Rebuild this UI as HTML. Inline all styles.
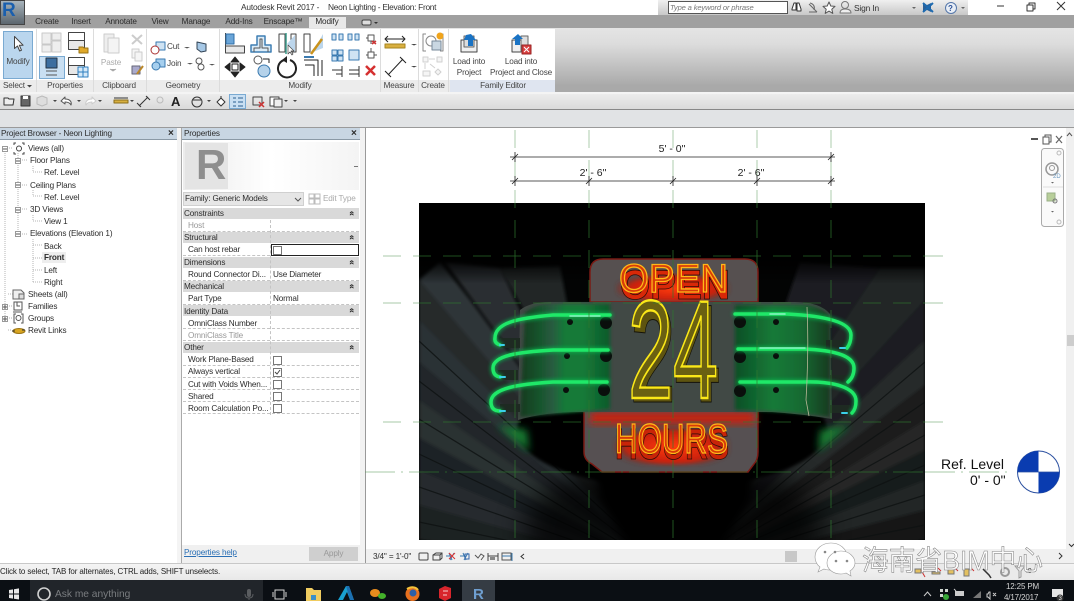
<!DOCTYPE html>
<html><head><meta charset="utf-8"><style>
html,body{margin:0;padding:0;background:#e1e3e5}
#p{position:relative;width:1074px;height:601px;overflow:hidden;font-family:"Liberation Sans","Noto Sans CJK SC",sans-serif;font-size:8.2px;letter-spacing:-.15px;color:#2c2c2c;filter:blur(.3px)}
#p div{position:absolute;white-space:nowrap}
#p svg text{letter-spacing:0}
.t{line-height:14px}
.c{transform:translateX(-50%);text-align:center}
.h{background:#d9d9d9;left:183px;width:176px;height:11.4px}
.r{left:183px;width:176px;height:11.4px;background:#fff;border-bottom:1px dashed #c4c4c4}
.u{left:349px;font-weight:bold;font-size:9px;line-height:9px;transform:rotate(-90deg)}
svg{position:absolute;left:0;top:0}
</style></head><body><div id="p">

<!-- chrome backgrounds -->
<div style="left:0;top:0;width:1074px;height:15px;background:#fff"></div>
<div style="left:0;top:15px;width:1074px;height:13px;background:#a0a0a0"></div>
<div style="left:0;top:28px;width:1074px;height:64px;background:linear-gradient(#e4e4e4,#dcdcdc 25%,#a9a9a9 90%)"></div>
<div style="left:0;top:29px;width:555px;height:51px;background:#fff"></div>
<div style="left:0;top:80px;width:555px;height:12px;background:#ececec"></div>
<div style="left:450px;top:80px;width:105px;height:12px;background:#dfe5f0"></div>
<div style="left:0;top:92px;width:1074px;height:2px;background:#f4f4f4"></div>
<div style="left:0;top:94px;width:1074px;height:15px;background:linear-gradient(#ececec,#dadada)"></div>
<div style="left:0;top:109px;width:1074px;height:1px;background:#888"></div>
<div style="left:0;top:110px;width:1074px;height:17px;background:#e1e3e5"></div>
<div style="left:0;top:127px;width:1074px;height:1px;background:#9a9a9a"></div>

<!-- separators -->
<div style="left:36px;top:29px;width:1px;height:63px;background:#dcdcdc"></div>
<div style="left:93px;top:29px;width:1px;height:63px;background:#dcdcdc"></div>
<div style="left:146px;top:29px;width:1px;height:63px;background:#dcdcdc"></div>
<div style="left:219px;top:29px;width:1px;height:63px;background:#dcdcdc"></div>
<div style="left:380px;top:29px;width:1px;height:63px;background:#dcdcdc"></div>
<div style="left:418px;top:29px;width:1px;height:63px;background:#dcdcdc"></div>
<div style="left:448px;top:29px;width:1px;height:63px;background:#dcdcdc"></div>

<!-- App button -->
<div style="left:0;top:0;width:25px;height:25px;background:linear-gradient(#a8b4bc,#5c666e);border:1px solid #444;box-sizing:border-box"></div>
<div style="left:2px;top:-1px;font:bold 19px/24px 'Liberation Sans',sans-serif;color:#1a5fae">R</div>

<!-- title -->
<div class="t" style="left:241px;top:0;font-size:8.4px;letter-spacing:-.2px;color:#333">Autodesk Revit 2017 -</div>
<div class="t" style="left:328px;top:0;font-size:8.4px;letter-spacing:-.3px;color:#333">Neon Lighting - Elevation: Front</div>

<!-- infocenter -->
<div style="left:658px;top:0;width:310px;height:15px;background:linear-gradient(#f0f0f0,#c8c8c8)"></div>
<div style="left:668px;top:1px;width:120px;height:13px;background:#fff;border:1px solid #555;box-sizing:border-box;font-style:italic;font-size:7.6px;letter-spacing:-.15px;line-height:11px;color:#777;padding-left:1px">Type a keyword or phrase</div>
<div class="t" style="left:854px;top:1px;font-size:8.4px;color:#333">Sign In</div>

<!-- tabs -->
<div style="left:309px;top:17px;width:37px;height:11px;background:#e8e8e8"></div>
<div class="t c" style="left:47px;top:15px;color:#2b2b2b">Create</div>
<div class="t c" style="left:81px;top:15px;color:#2b2b2b">Insert</div>
<div class="t c" style="left:121px;top:15px;color:#2b2b2b">Annotate</div>
<div class="t c" style="left:160px;top:15px;color:#2b2b2b">View</div>
<div class="t c" style="left:196px;top:15px;color:#2b2b2b">Manage</div>
<div class="t c" style="left:239px;top:15px;color:#2b2b2b">Add-Ins</div>
<div class="t c" style="left:283px;top:15px;color:#2b2b2b">Enscape™</div>
<div class="t c" style="left:327px;top:15px;color:#2b2b2b">Modify</div>

<!-- modify btn -->
<div style="left:3px;top:31px;width:30px;height:48px;background:#bad6ee;border:1px solid #7aaad2;box-sizing:border-box"></div>
<div class="t c" style="left:18px;top:55px;color:#444">Modify</div>
<div style="left:39px;top:56px;width:26px;height:23px;background:#c9dff2;border:1px solid #7aaad2;box-sizing:border-box"></div>

<!-- ribbon text -->
<div class="t" style="left:3px;top:79px;color:#444">Select</div>
<div class="t c" style="left:65px;top:79px;color:#444">Properties</div>
<div class="t c" style="left:119px;top:79px;color:#444">Clipboard</div>
<div class="t c" style="left:183px;top:79px;color:#444">Geometry</div>
<div class="t c" style="left:300px;top:79px;color:#444">Modify</div>
<div class="t c" style="left:399px;top:79px;color:#444">Measure</div>
<div class="t c" style="left:433px;top:79px;color:#444">Create</div>
<div class="t c" style="left:503px;top:79px;color:#444">Family Editor</div>
<div class="t c" style="left:111px;top:56px;color:#aaa">Paste</div>
<div class="t" style="left:167px;top:40px;color:#444">Cut</div>
<div class="t" style="left:167px;top:57px;color:#444">Join</div>
<div class="t c" style="left:469px;top:55px;color:#444">Load into</div>
<div class="t c" style="left:469px;top:66px;color:#444">Project</div>
<div class="t c" style="left:521px;top:55px;color:#444">Load into</div>
<div class="t c" style="left:521px;top:66px;color:#444">Project and Close</div>
<div style="left:229px;top:94px;width:17px;height:15px;background:#c9dff2;border:1px solid #7aaad2;box-sizing:border-box"></div>

<!-- Ribbon / QAT / infocenter icons -->
<svg width="1074" height="128" viewBox="0 0 1074 128" fill="none" stroke-linejoin="round">
 <path d="M14.500 36.500v12l3-2.500 2.200 5 1.800-.8-2.200-5h3.800z" fill="#fff" stroke="#444"/>
 <!-- properties -->
 <g stroke="#c8c8c8" fill="#eee"><rect x="42" y="33" width="9" height="11"/><rect x="52" y="33" width="9" height="7"/><rect x="42" y="45" width="9" height="7"/><rect x="52" y="41" width="9" height="11"/></g>
 <g stroke="#444"><rect x="68.500" y="32.500" width="16" height="8" fill="#fff"/><rect x="68.500" y="40.500" width="16" height="9" fill="#e8e8e8"/></g>
 <path d="M79 47h4l1 1h4v5h-9z" fill="#e0a92a" stroke="#9a7415"/>
 <rect x="46" y="58" width="11" height="10" fill="#3c6ea0" stroke="#234"/><path d="M46 71h11M46 75h11" stroke="#555"/>
 <g stroke="#444"><rect x="68.500" y="57.500" width="16" height="8" fill="#fff"/><rect x="68.500" y="65.500" width="16" height="9" fill="#e8e8e8"/></g>
 <g stroke="#2f7fc0" fill="#d5e8f7"><rect x="78" y="67" width="5" height="5"/><rect x="83" y="67" width="5" height="5"/><rect x="78" y="72" width="5" height="5"/><rect x="83" y="72" width="5" height="5"/></g>
 <!-- clipboard -->
 <path d="M104 34h10v18h-10z" fill="#eee" stroke="#ccc"/><path d="M108 38h11v15h-11z" fill="#f4f4f4" stroke="#ccc"/>
 <path d="M132 35l10 9M142 35l-10 9" stroke="#ccc" stroke-width="2"/>
 <rect x="132" y="49" width="7" height="9" fill="#f5f5f5" stroke="#ccc"/><rect x="135" y="52" width="7" height="9" fill="#f5f5f5" stroke="#ccc"/>
 <path d="M132 66h8v8h-8z" fill="#aac" stroke="#667"/><path d="M137 74l6-8" stroke="#b8862a" stroke-width="2"/>
 <path d="M110 69l3 2 3-2" stroke="#aaa" fill="#aaa"/>
 <!-- geometry -->
 <rect x="156" y="42" width="9" height="8" fill="#cfe3f3" stroke="#3a7ab0"/><circle cx="155" cy="50" r="4" fill="#fff" stroke="#a33"/>
 <rect x="156" y="59" width="9" height="8" fill="#a6cfee" stroke="#3a7ab0"/><circle cx="156" cy="66" r="4" fill="#a6cfee" stroke="#3a7ab0"/>
 <path d="M184 47l3 1.500 3-1.500zM187 63l3 1.500 3-1.500z" fill="#555"/>
 <path d="M197 42l9 2v7l-5 1-4-3z" fill="#a6c8e6" stroke="#345"/>
 <circle cx="199" cy="61" r="3" stroke="#555"/><circle cx="201" cy="67" r="3" stroke="#555"/><path d="M209 64l3 1.500 3-1.500z" fill="#555"/>
 <!-- modify row 1 -->
 <path d="M225.500 33v20h19v-7h-19" stroke="#444" fill="#e8e8e8"/><rect x="226" y="34" width="8" height="10" fill="#6aa5d8" stroke="#2f6fa8"/>
 <path d="M251 52v-7h6v-9h8v9h6v7z" stroke="#3f7fb4" fill="#dcecf8" stroke-width="1.500"/><path d="M254 52v-4h6v-9h2v9h6v4" stroke="#555"/>
 <path d="M279 34h6v18h-6zM291 34h5v18h-5z" fill="#fff" stroke="#444"/><path d="M286 33v21" stroke="#3a9a8a" stroke-width="1.500"/><path d="M287 44l8-9v17z" fill="#bcd6ec"/><path d="M288 45v9l2-2 2 3 1-1-2-3h3z" fill="#fff" stroke="#444" stroke-width=".7"/>
 <path d="M304 34h6v18h-6z" fill="#fff" stroke="#444"/><path d="M313 52l10-18v14z" fill="#bcd6ec"/><path d="M311 54l11-15" stroke="#c9921d" stroke-width="2.500"/>
 <!-- row 2 -->
 <path d="M235 57l4 5h-8zM235 77l4-5h-8zM225 67l5-4v8zM245 67l-5-4v8z" fill="#222" stroke="#222"/><rect x="232" y="64" width="6" height="6" stroke="#222" fill="#fff"/>
 <circle cx="258" cy="60" r="4" stroke="#555" fill="#fff"/><circle cx="264" cy="71" r="6" fill="#b5d2ea" stroke="#3a7ab0"/><path d="M263 59h6v4" stroke="#222"/>
 <path d="M284 60a9 9 0 1 0 6 0" stroke="#222" stroke-width="2"/><path d="M287 56l-5 4 5 3z" fill="#222"/>
 <path d="M304 60h14v16M305 65h9v11M322 60v16" stroke="#222"/><path d="M304 57h10" stroke="#3a7ab0" stroke-width="2"/>
 <!-- small -->
 <g stroke="#3a7ab0" fill="#cfe3f3"><rect x="332" y="34" width="4" height="6"/><rect x="339" y="34" width="4" height="6"/><rect x="348" y="34" width="4" height="6"/><rect x="355" y="34" width="4" height="6"/>
 <rect x="332" y="50" width="5" height="5"/><rect x="338" y="50" width="5" height="5"/><rect x="332" y="56" width="5" height="5"/><rect x="338" y="56" width="5" height="5"/>
 <rect x="349" y="50" width="10" height="10"/></g>
 <path d="M332 70h10M336 74h6M342 66v11M349 70h10M349 74h10M359 66v11" stroke="#333"/>
 <path d="M368 35h6v6h-6zM366 38h2M371 41v3" stroke="#555"/><path d="M372 41l4 3M376 41l-4 3" stroke="#c33" stroke-width="1.500"/>
 <path d="M368 52h6v6h-6zM366 55h2M374 55h3M371 48v4" stroke="#555"/>
 <path d="M366 66l9 9M375 66l-9 9" stroke="#d53030" stroke-width="2.500"/>
 <!-- measure -->
 <path d="M385 39h20M388 36l-3 3 3 3M402 36l3 3-3 3" stroke="#222"/><rect x="385" y="44" width="20" height="4" fill="#d9b040" stroke="#a68520"/>
 <path d="M388 75l15-16M385 71l6 6M400 57l6 6" stroke="#222"/><path d="M411 44l3 1.500 3-1.500zM411 66l3 1.500 3-1.500z" fill="#444"/>
 <!-- create -->
 <path d="M426 34h-3v17h3M440 34h3v17h-3" stroke="#888"/><circle cx="431" cy="41" r="5" stroke="#888" fill="#fff"/><rect x="432" y="41" width="9" height="9" fill="#c9d7e2" stroke="#789"/><circle cx="440" cy="36" r="3.500" fill="#f0a41c"/>
 <g stroke="#d0d0d0" fill="#f5f5f5"><rect x="423" y="57" width="5" height="5"/><rect x="437" y="57" width="5" height="5"/><rect x="423" y="71" width="7" height="5"/><path d="M438 69l3 3-3 3-3-3z"/></g><path d="M429 59h6M425 63v6M430 64l5 4" stroke="#d0d0d0"/>
 <!-- load -->
 <path d="M461 40h16v12h-16z" fill="#f0f0f0" stroke="#444"/><path d="M464 36h10v11h-10z" fill="#ddd" stroke="#666"/><path d="M466 35l5-1 5 6h-3v6h-5v-6h-4z" fill="#1a73c4"/>
 <path d="M512 40h12v12h-12z" fill="#f0f0f0" stroke="#444"/><rect x="521" y="36" width="7" height="16" fill="#ddd" stroke="#666"/><path d="M518 34l5 5h-3v6h-5v-6h-3z" fill="#1a73c4"/><rect x="522" y="45" width="9" height="9" fill="#d84040" stroke="#922"/><path d="M524 47l5 5M529 47l-5 5" stroke="#fff"/>
 <!-- select arrow, tab -->
 <path d="M27 85l5 0-2.500 2.500z" fill="#444"/><rect x="362" y="20" width="9" height="5" rx="1.500" fill="#ddd" stroke="#444"/><path d="M374 22h4l-2 2z" fill="#333"/>
 <!-- qat -->
 <path d="M4 98h4l1 1h5l-1 6H4z" fill="#eee" stroke="#333"/>
 <rect x="21" y="96" width="9" height="10" fill="#666" stroke="#333"/><rect x="23" y="96" width="5" height="3" fill="#fff"/>
 <path d="M37 98l5-2 5 2v6l-5 2-5-2z" stroke="#bbb" fill="#ddd"/><path d="M53 100h4l-2 2zM77 100h4l-2 2zM98 100h4l-2 2zM130 100h4l-2 2zM207 100h4l-2 2zM284 100h4l-2 2zM293 100h4l-2 2z" fill="#444"/>
 <path d="M61 101l4-4v2c5 0 7 3 6 6-1-2-3-3-6-3v2z" stroke="#555" fill="#fff"/><path d="M96 101l-4-4v2c-5 0-7 3-6 6 1-2 3-3 6-3v2z" stroke="#ccc" fill="#fff"/>
 <rect x="114" y="100" width="14" height="3" fill="#d8b040" stroke="#8a6d1a"/><path d="M114 98h14" stroke="#333"/>
 <path d="M139 106l9-9M137 103l4 4M146 96l4 4" stroke="#333"/><circle cx="160" cy="100" r="3" stroke="#bbb"/>
 <text x="171" y="106" font-family="Liberation Sans" font-size="13" font-weight="bold" fill="#222">A</text>
 <circle cx="197" cy="102" r="5" stroke="#333"/><path d="M193 100h8" stroke="#333"/>
 <path d="M217 102l4-4 4 4-4 4zM221 96v2" stroke="#333" fill="#fff"/>
 <path d="M233 98h3M238 98h5M233 102h3M238 102h5M233 106h3M238 106h5" stroke="#2a5f90"/>
 <rect x="253" y="97" width="9" height="8" stroke="#444"/><path d="M259 102l5 5M264 102l-5 5" stroke="#c33" stroke-width="1.500"/>
 <rect x="270" y="97" width="9" height="9" fill="#fff" stroke="#444"/><rect x="274" y="99" width="8" height="8" fill="#eee" stroke="#444"/>
 <!-- infocenter icons -->
 <path d="M792 9l2-6h2v7h-4zM797 10v-7h2l2 6v2h-4z" stroke="#333" fill="#fff"/>
 <path d="M809 4l8 8M809 12h8M810 3c4 1 5 4 4 7" stroke="#666"/>
 <path d="M829 2l1.800 4 4.200.4-3.200 2.800 1 4.200-3.800-2.300-3.800 2.300 1-4.200-3.200-2.800 4.200-.4z" stroke="#555" fill="#fff"/>
 <circle cx="845" cy="5" r="3.500" stroke="#777"/><path d="M840 13c0-3 2-4 5-4s6 1 6 4z" stroke="#777" fill="#eee"/>
 <path d="M912 7h4l-2 2z" fill="#666"/>
 <path d="M923 3l4 2 4-2v9l-4-2-4 2z" fill="#2a5f96"/><path d="M923 3l10 9M933 3l-10 9" stroke="#1d6ab0" stroke-width="2"/>
 <circle cx="951" cy="8" r="5.500" stroke="#5577aa" fill="#e8eef6"/><text x="948" y="11" font-family="Liberation Sans" font-size="8" font-weight="bold" fill="#2a4f96">?</text>
 <path d="M961 7h4l-2 2z" fill="#666"/>
 <path d="M997 6h7" stroke="#333"/><rect x="1027" y="5" width="6" height="6" stroke="#333" fill="#fff"/><path d="M1029 5v-2h6v6h-2" stroke="#333"/><path d="M1057 2l8 8M1065 2l-8 8" stroke="#333"/>
</svg>

<!-- Project Browser -->
<div style="left:0;top:128px;width:181px;height:435px;background:#fff"></div>
<div style="left:177px;top:128px;width:4px;height:435px;background:#f4f4f4"></div>
<div style="left:0;top:128px;width:177px;height:12px;background:#c8d6e3;border-bottom:1px solid #8a99a6;box-sizing:border-box"></div>
<div class="t" style="left:1px;top:127px">Project Browser - Neon Lighting</div>
<div class="t" style="left:168px;top:127px;font-weight:bold;font-size:10px">×</div>
<div class="t" style="left:28px;top:142px">Views (all)</div>
<div class="t" style="left:30px;top:154px">Floor Plans</div>
<div class="t" style="left:44px;top:166px">Ref. Level</div>
<div class="t" style="left:30px;top:179px">Ceiling Plans</div>
<div class="t" style="left:44px;top:191px">Ref. Level</div>
<div class="t" style="left:30px;top:203px">3D Views</div>
<div class="t" style="left:44px;top:215px">View 1</div>
<div class="t" style="left:30px;top:227px">Elevations (Elevation 1)</div>
<div class="t" style="left:44px;top:240px">Back</div>
<div style="left:42px;top:252px;width:24px;height:11px;background:#eee"></div>
<div class="t" style="left:44px;top:251px;font-weight:bold">Front</div>
<div class="t" style="left:44px;top:264px">Left</div>
<div class="t" style="left:44px;top:276px">Right</div>
<div class="t" style="left:28px;top:288px">Sheets (all)</div>
<div class="t" style="left:28px;top:300px">Families</div>
<div class="t" style="left:28px;top:312px">Groups</div>
<div class="t" style="left:28px;top:324px">Revit Links</div>
<svg width="177" height="340" viewBox="0 0 177 340" fill="none" stroke="#b5b5b5">
 <path d="M5 153v165M18 153v81M9 148h3M22 160h6M22 185h6M22 209h6M22 234h6M33 166v6h9M33 190v6h9M33 215v6h9M33 239v43M33 245h9M33 258h9M33 270h9M33 282h9M8 294h5M9 306h3M9 318h3M8 330h4" stroke-dasharray="1 1"/>
 <g fill="#fff" stroke="#999"><rect x="2.500" y="146.500" width="5" height="5"/><rect x="15.500" y="158.500" width="5" height="5"/><rect x="15.500" y="182.500" width="5" height="5"/><rect x="15.500" y="207.500" width="5" height="5"/><rect x="15.500" y="231.500" width="5" height="5"/><rect x="2.500" y="304.500" width="5" height="5"/><rect x="2.500" y="316.500" width="5" height="5"/></g>
 <path d="M3 149h4M16 161h4M16 185h4M16 210h4M16 234h4M3 307h4M5 305v4M3 319h4M5 317v4" stroke="#555"/>
 <path d="M14 145v-2h2M22 143h2v2M24 152v2h-2M16 154h-2v-2" stroke="#444"/><circle cx="19" cy="148.500" r="2.500" stroke="#444"/>
 <path d="M13 290h8l3 3v6H13z" fill="#eee" stroke="#666"/><rect x="19" y="294" width="5" height="5" fill="#ddd" stroke="#666"/>
 <path d="M14 302h8v8h-8z" stroke="#555"/><path d="M17 302v4h3" stroke="#555"/><path d="M13 312h9" stroke="#555"/>
 <path d="M16 314h-2v9h2M21 314h2v9h-2" stroke="#555"/><circle cx="18.500" cy="318" r="2.500" stroke="#555"/>
 <ellipse cx="19" cy="331" rx="6" ry="2.500" fill="#d9a520" stroke="#9a7415"/><path d="M12 331h3M22 330h3" stroke="#333"/>
</svg>

<!-- Properties -->
<div style="left:181px;top:128px;width:184px;height:435px;background:#fff;border-left:1px solid #aaa;box-sizing:border-box"></div>
<div style="left:360px;top:128px;width:5px;height:435px;background:#f2f2f2"></div>
<div style="left:182px;top:545px;width:178px;height:18px;background:#f0f0f0"></div>
<div style="left:182px;top:128px;width:178px;height:12px;background:#c8d6e3;border-bottom:1px solid #8a99a6;box-sizing:border-box"></div>
<div class="t" style="left:184px;top:127px">Properties</div>
<div class="t" style="left:351px;top:127px;font-weight:bold;font-size:10px">×</div>
<div style="left:183px;top:142px;width:176px;height:48px;background:linear-gradient(90deg,#ececec,#fff 50%,#f4f4f4)"></div>
<div style="left:185px;top:143px;width:43px;height:46px;background:#e4e4e4"></div>
<div style="left:196px;top:141px;font:bold 42px/48px 'Liberation Sans',sans-serif;letter-spacing:0;color:#8e8e8e">R</div>
<div style="left:354px;top:166px;width:4px;height:1px;background:#777"></div>
<div style="left:183px;top:192px;width:121px;height:14px;background:#e6e6e6;border:1px solid #d0d0d0;box-sizing:border-box"></div>
<div class="t" style="left:185px;top:192px">Family: Generic Models</div>
<div class="t" style="left:323px;top:192px;color:#aaa">Edit Type</div>
<svg style="left:0;top:0" width="370" height="210" viewBox="0 0 370 210" fill="none"><path d="M295 198l3 3 3-3" stroke="#555"/><rect x="309" y="194" width="5" height="4" stroke="#bbb"/><rect x="315" y="194" width="5" height="4" stroke="#bbb"/><rect x="309" y="199" width="5" height="5" stroke="#bbb"/><rect x="315" y="199" width="5" height="5" stroke="#bbb"/></svg>

<div style="left:183px;top:208px;width:176px;height:207px;background:#fff"></div>
<div class="h" style="top:208px"></div><div class="t" style="left:184px;top:207px">Constraints</div><div class="u" style="top:209px">»</div>
<div class="r" style="top:220px"></div><div class="t" style="left:188px;top:219px;color:#999">Host</div>
<div class="h" style="top:232px"></div><div class="t" style="left:184px;top:231px">Structural</div><div class="u" style="top:233px">»</div>
<div class="r" style="top:244px"></div><div class="t" style="left:188px;top:243px">Can host rebar</div>
<div class="h" style="top:257px"></div><div class="t" style="left:184px;top:256px">Dimensions</div><div class="u" style="top:258px">»</div>
<div class="r" style="top:269px"></div><div class="t" style="left:188px;top:268px">Round Connector Di...</div><div class="t" style="left:273px;top:268px">Use Diameter</div>
<div class="h" style="top:281px"></div><div class="t" style="left:184px;top:280px">Mechanical</div><div class="u" style="top:282px">»</div>
<div class="r" style="top:293px"></div><div class="t" style="left:188px;top:292px">Part Type</div><div class="t" style="left:273px;top:292px">Normal</div>
<div class="h" style="top:305px"></div><div class="t" style="left:184px;top:305px">Identity Data</div><div class="u" style="top:306px">»</div>
<div class="r" style="top:317px"></div><div class="t" style="left:188px;top:317px">OmniClass Number</div>
<div class="r" style="top:329px"></div><div class="t" style="left:188px;top:329px;color:#999">OmniClass Title</div>
<div class="h" style="top:342px"></div><div class="t" style="left:184px;top:341px">Other</div><div class="u" style="top:343px">»</div>
<div class="r" style="top:354px"></div><div class="t" style="left:188px;top:353px">Work Plane-Based</div>
<div class="r" style="top:366px"></div><div class="t" style="left:188px;top:365px">Always vertical</div>
<div class="r" style="top:378px"></div><div class="t" style="left:188px;top:378px">Cut with Voids When...</div>
<div class="r" style="top:390px"></div><div class="t" style="left:188px;top:390px">Shared</div>
<div class="r" style="top:402px"></div><div class="t" style="left:188px;top:402px">Room Calculation Po...</div>
<div style="left:270px;top:220px;width:0;height:195px;border-left:1px dashed #c4c4c4"></div>
<div style="left:271px;top:244px;width:88px;height:12px;background:#fff;border:1px solid #222;box-sizing:border-box"></div>
<svg width="370" height="420" viewBox="0 0 370 420" fill="#fff" stroke="#777"><rect x="273.500" y="246.500" width="8" height="8"/><rect x="273.500" y="356.500" width="8" height="8"/><rect x="273.500" y="368.500" width="8" height="8"/><rect x="273.500" y="380.500" width="8" height="8"/><rect x="273.500" y="392.500" width="8" height="8"/><rect x="273.500" y="404.500" width="8" height="8"/><path d="M275 372l2 2 3-4" fill="none" stroke="#444"/></svg>
<div class="t" style="left:184px;top:546px;color:#2a6fb5;text-decoration:underline">Properties help</div>
<div style="left:309px;top:547px;width:49px;height:14px;background:#cfcfcf;color:#999;text-align:center;line-height:14px">Apply</div>

<!-- Drawing area -->
<div style="left:365px;top:128px;width:709px;height:435px;background:#fff;border-left:1px solid #999;box-sizing:border-box"></div>
<div style="left:1066px;top:128px;width:8px;height:435px;background:#f0f0f0"></div>
<div style="left:1067px;top:335px;width:7px;height:11px;background:#cdcdcd"></div>

<svg width="1074" height="601" viewBox="0 0 1074 601" fill="none" font-family="Liberation Sans">
<defs>
 <filter id="b1" x="-20%" y="-20%" width="140%" height="140%"><feGaussianBlur stdDeviation="1.500"/></filter>
 <filter id="b3" x="-30%" y="-30%" width="160%" height="160%"><feGaussianBlur stdDeviation="4"/></filter>
 <filter id="b6" x="-40%" y="-40%" width="180%" height="180%"><feGaussianBlur stdDeviation="14"/></filter>
 <filter id="g" x="-10%" y="-30%" width="120%" height="160%"><feGaussianBlur stdDeviation="1.800"/></filter>
 <clipPath id="im"><rect x="419" y="203" width="506" height="337"/></clipPath>
 <clipPath id="op"><rect x="590" y="258" width="168" height="44"/></clipPath>
 <linearGradient id="gr" x1="0" x2="1" y1="0" y2="0"><stop offset="0" stop-color="#123a20"/><stop offset=".22" stop-color="#16552c"/><stop offset=".35" stop-color="#2a5a40"/><stop offset=".5" stop-color="#147a38"/><stop offset=".7" stop-color="#167a38"/><stop offset="1" stop-color="#0c5a2a"/></linearGradient>
 <linearGradient id="gr2" x1="1" x2="0" y1="0" y2="0"><stop offset="0" stop-color="#123a20"/><stop offset=".3" stop-color="#146a32"/><stop offset=".6" stop-color="#157a38"/><stop offset="1" stop-color="#0d4f26"/></linearGradient>
 <linearGradient id="fd" x1="0" x2="0" y1="0" y2="1"><stop offset="0" stop-color="#000"/><stop offset=".16" stop-color="#000"/><stop offset=".24" stop-color="#000" stop-opacity="0"/></linearGradient>
 <radialGradient id="rd" cx=".5" cy=".55" r=".55"><stop offset="0" stop-color="#ff3a08"/><stop offset=".7" stop-color="#c8200a"/><stop offset="1" stop-color="#5a3030" stop-opacity="0"/></radialGradient>
</defs>
<g clip-path="url(#im)">
 <rect x="419" y="203" width="506" height="337" fill="#030404"/>
 <g filter="url(#b1)">
  <!-- left fan -->
  <path d="M673 575L419 540V505z" fill="#1d2123"/>
  <path d="M673 575L419 505V470z" fill="#282c2e"/>
  <path d="M673 575L419 470V438z" fill="#1f2426"/>
  <path d="M673 575L419 438V400z" fill="#2b3032"/>
  <path d="M673 575L419 400V362z" fill="#222729"/>
  <path d="M673 575L419 362V320z" fill="#2c3336"/>
  <path d="M673 575L419 320V280z" fill="#25292c"/>
  <path d="M673 575L419 280 440 262 470 300z" fill="#2f3437"/>
  <path d="M673 575L445 262 500 268 520 310z" fill="#292e31"/>
  <path d="M673 575L500 268 560 266 570 320z" fill="#212528"/>
  <!-- right fan -->
  <path d="M673 575L925 540V510z" fill="#161817"/>
  <path d="M673 575L925 510V480z" fill="#232628"/>
  <path d="M673 575L925 480V450z" fill="#181b1a"/>
  <path d="M673 575L925 450V420z" fill="#282826"/>
  <path d="M673 575L925 420V385z" fill="#1a1d1c"/>
  <path d="M673 575L925 385V340z" fill="#272929"/>
  <path d="M673 575L925 340V300z" fill="#1b1f21"/>
  <path d="M673 575L925 300V268L880 268z" fill="#212528"/>
  <path d="M673 575L880 268 800 262 780 320z" fill="#1b1f21"/>
 </g>
 <g stroke="#0e1112" stroke-width="1.200" opacity=".8">
  <path d="M673 575L419 522M673 575L419 487M673 575L419 454M673 575L419 419M673 575L419 381M673 575L419 341M673 575L925 525M673 575L925 495M673 575L925 465M673 575L925 435M673 575L925 402M673 575L925 362"/>
 </g>
 <rect x="419" y="203" width="506" height="337" fill="url(#fd)"/>
 <ellipse cx="673" cy="530" rx="150" ry="75" fill="#000" opacity=".75" filter="url(#b6)"/>
 <ellipse cx="672" cy="430" rx="155" ry="58" fill="#000" filter="url(#b1)"/>
 <path d="M592 460h162l-4 40-30 50h-90l-30-50z" fill="#000" filter="url(#b3)"/>
 <!-- green glow under ends -->
 <path d="M497 425l30 5 2 22z" fill="#127a32" filter="url(#b3)"/>
 <path d="M850 425l-30 5-2 22z" fill="#127a32" filter="url(#b3)"/>
 <!-- open plate -->
 <path d="M590 302v-30q0-13 13-13h142q13 0 13 13v30z" fill="#565050" stroke="#7a1a14" stroke-width="1.500"/>
 <rect x="616" y="272" width="114" height="30" fill="url(#rd)" filter="url(#b1)"/>
 <!-- hours plate -->
 <path d="M584 410v42q0 8 8 12l10 8h146l6-8q4-4 4-12v-42z" fill="#565052" stroke="#7a1a14" stroke-width="1.500"/>
 <path d="M590 412h165v12H590z" fill="#c8200a" filter="url(#b3)"/>
 <rect x="614" y="425" width="116" height="40" fill="url(#rd)" filter="url(#b1)"/>
 <!-- band -->
 <path d="M520 310q10-8 30-8h245q25 0 35 12l2 105q-30-5-60-7H580q-35 0-62 8z" fill="#414945"/>
 <path d="M525 313q8-8 25-9l60 0v105l-90 8z" fill="url(#gr)" filter="url(#b1)"/>
 <path d="M735 305h70q18 2 25 12l0 100q-40-6-95-7z" fill="url(#gr2)" filter="url(#b1)"/>
 <!-- studs -->
 <g fill="#0a0f0c"><circle cx="606" cy="323" r="6"/><circle cx="606" cy="356" r="6"/><circle cx="604" cy="390" r="6"/><circle cx="740" cy="322" r="6"/><circle cx="740" cy="357" r="6"/><circle cx="740" cy="391" r="6"/><circle cx="570" cy="322" r="3"/><circle cx="567" cy="356" r="3"/><circle cx="566" cy="390" r="3"/><circle cx="776" cy="322" r="3"/><circle cx="776" cy="356" r="3"/><circle cx="776" cy="390" r="3"/></g>
 <!-- side brackets -->
 <g fill="#1e2a22"><rect x="500" y="338" width="20" height="10"/><rect x="498" y="370" width="20" height="10"/><rect x="500" y="404" width="20" height="8"/><rect x="826" y="340" width="20" height="10"/><rect x="830" y="375" width="20" height="10"/><rect x="830" y="405" width="20" height="8"/></g>
 <!-- green tubes -->
 <g stroke-linecap="round">
 <g stroke="#0fb850" stroke-width="6" filter="url(#g)" opacity=".7">
  <path d="M610 315H553C520 318 495 322 495 338Q494 343 500 345"/>
  <path d="M608 350H553C520 352 493 355 493 368Q493 376 500 377"/>
  <path d="M607 382H553C520 384 491 388 491 402Q491 411 500 411"/>
  <path d="M735 314H787C825 316 851 322 851 335Q851 343 847 348"/>
  <path d="M738 349H803C835 350 854 356 854 368Q854 377 848 382"/>
  <path d="M740 382H803C835 381 856 388 856 401Q856 409 852 413"/>
 </g>
 <g stroke="#1fe868" stroke-width="3.500">
  <path d="M610 315H553C520 318 495 322 495 338Q494 343 500 345"/>
  <path d="M608 350H553C520 352 493 355 493 368Q493 376 500 377"/>
  <path d="M607 382H553C520 384 491 388 491 402Q491 411 500 411"/>
  <path d="M735 314H787C825 316 851 322 851 335Q851 343 847 348"/>
  <path d="M738 349H803C835 350 854 356 854 368Q854 377 848 382"/>
  <path d="M740 382H803C835 381 856 388 856 401Q856 409 852 413"/>
 </g>
 <g stroke="#8cf4c4" stroke-width="1.500"><path d="M570 316h30M760 348h45M770 314h15"/></g>
 <g stroke="#3ad0e8" stroke-width="2"><path d="M500 345h4M500 377h5M500 411h5M840 348h5M842 413h5"/></g>
 </g>
 <path d="M807 307Q809 350 806 400l3 16" stroke="#b8b898" stroke-width=".8"/>
 <!-- OPEN -->
 <g clip-path="url(#op)"><text x="620" y="299" font-size="42" font-weight="bold" textLength="110" lengthAdjust="spacingAndGlyphs" fill="#d82808" stroke="#2a0d08" stroke-width=".8">OPEN</text></g>
 <text x="619" y="292" font-size="40" textLength="109" lengthAdjust="spacingAndGlyphs" fill="#d83c08" stroke="#ffb818" stroke-width="1.300">OPEN</text>
 <!-- HOURS -->
 <text x="615" y="459" font-size="44" font-weight="bold" textLength="114" lengthAdjust="spacingAndGlyphs" fill="#c82408" stroke="#2a0d08" stroke-width=".8">HOURS</text>
 <text x="615" y="453" font-size="42" textLength="113" lengthAdjust="spacingAndGlyphs" fill="#d83c08" stroke="#ffb818" stroke-width="1.300">HOURS</text>
 <!-- 24 -->
 <text x="631" y="402" font-size="140" font-weight="bold" textLength="88" lengthAdjust="spacingAndGlyphs" fill="#5e5410" stroke="#141208" stroke-width="1">24</text>
 <text x="628" y="398" font-size="140" textLength="90" lengthAdjust="spacingAndGlyphs" fill="#6a6012" stroke="#fbe818" stroke-width="2.400">24</text>
</g>

<!-- grid dashed -->
<g clip-path="url(#im)" stroke="#2f7a2f" stroke-width=".8" stroke-dasharray="18 12" opacity=".85">
 <path d="M515 130V540M589 130V540M673 130V540M757 130V540M831 130V540"/>
 <path d="M383 256H945M383 303H945M383 422H945"/>
 <path d="M365 472H1008" stroke-dasharray="30 6 2 6"/>
</g>
<g stroke="#5a9a5a" stroke-width=".7" stroke-dasharray="18 12" opacity=".7">
 <path d="M515 130V203M589 130V203M673 130V203M757 130V203M831 130V203"/>
 <path d="M383 256H419M383 303H419M383 422H419M925 256H945M925 303H945M925 422H945"/>
 <path d="M365 472H419M925 472H1008" stroke-dasharray="30 6 2 6"/>
</g>

<!-- dims -->
<g stroke="#222" stroke-width=".8">
 <path d="M510 157H835M510 181H835M515 152V162M831 152V162M515 176V186M589 176V186M673 176V186M757 176V186M831 176V186"/>
 <path d="M512 160l6-6M828 160l6-6M512 184l6-6M586 184l6-6M670 184l6-6M754 184l6-6M828 184l6-6"/>
</g>
<g fill="#222" font-size="10.500" text-anchor="middle"><text x="672" y="152">5' - 0"</text><text x="593" y="176">2' - 6"</text><text x="751" y="176">2' - 6"</text></g>

<!-- level -->
<text x="941" y="469" font-size="14" fill="#111">Ref. Level</text>
<text x="970" y="485" font-size="14" fill="#111">0' - 0"</text>
<circle cx="1038.500" cy="472" r="21" fill="#fff" stroke="#2a4fa0"/>
<path d="M1038.500 472V451A21 21 0 0 0 1017.500 472zM1038.500 472V493A21 21 0 0 0 1059.500 472z" fill="#0a3cb0"/>
<path d="M1017 472h43" stroke="#2a4fa0" stroke-width=".7"/>

<!-- view controls top right -->
<path d="M1031 139h7" stroke="#555" stroke-width="2"/><rect x="1043" y="137" width="6" height="7" stroke="#555" fill="#fff"/><path d="M1045 137v-2h6v7h-2" stroke="#555"/><path d="M1056 136l6 7M1062 136l-6 7" stroke="#666" stroke-width="1.200"/>
<path d="M1067 136l2.500-3 2.500 3" stroke="#555"/>
<rect x="1041.500" y="148.500" width="22" height="78" rx="3" fill="#fafafa" stroke="#aaa"/>
<circle cx="1059" cy="153" r="2" stroke="#bbb"/><circle cx="1059" cy="222" r="2" stroke="#bbb"/>
<circle cx="1052" cy="169" r="6" stroke="#999" stroke-width="1.500"/><circle cx="1052" cy="168" r="2.500" stroke="#999"/>
<text x="1053" y="178" font-size="6" fill="#6a98c0">2D</text><path d="M1051 182h3l-1.500 1.500z" fill="#666"/><path d="M1043 187h20" stroke="#ddd"/>
<rect x="1047" y="193" width="8" height="8" fill="#b8ce9a" stroke="#9ab088"/><circle cx="1055" cy="201" r="2" stroke="#777"/><path d="M1051 211h3l-1.500 1.500z" fill="#666"/>
</svg>

<!-- bottom view bar -->
<div style="left:366px;top:549px;width:708px;height:14px;background:#f0f0f0"></div>
<div style="left:785px;top:551px;width:12px;height:11px;background:#c8c8c8"></div>
<div class="t" style="left:373px;top:550px">3/4" = 1'-0"</div>
<svg width="1074" height="580" viewBox="0 0 1074 580" fill="none">
 <rect x="419" y="553" width="9" height="7" rx="1" stroke="#444"/><path d="M433 560v-5l3-2h6v5l-2 2zM433 555h7v5M440 555l2-2" stroke="#444"/>
 <path d="M446 556h4M449 553l3 7M454 553l-4 7" stroke="#3a7ab0"/><path d="M449 553l6 6M455 553l-6 6" stroke="#d33"/>
 <path d="M460 556h4M463 553l3 7M468 553l-4 7" stroke="#3a7ab0"/><rect x="465" y="554" width="4" height="5" stroke="#36a"/>
 <path d="M475 555l3 3 3-4 3 2-3 4" stroke="#555"/><path d="M488 553v8M498 553v8M488 556h10" stroke="#444"/><rect x="490" y="557" width="5" height="3" fill="#888"/>
 <rect x="502" y="553" width="9" height="7" stroke="#555"/><path d="M502 556h9M512 553v8" stroke="#3a7ab0"/>
 <path d="M524 554l-3 2.500 3 2.500M1059 553l3 3-3 3M1069 544l2.500 2.500 2.500-2.500" stroke="#333"/>
</svg>

<!-- Status bar -->
<div style="left:0;top:563px;width:1074px;height:17px;background:linear-gradient(#f4f4f4,#e8e8e8);border-top:1px solid #c8c8c8;box-sizing:border-box"></div>
<div class="t" style="left:0;top:565px;font-size:8px;letter-spacing:-.12px;color:#222">Click to select, TAB for alternates, CTRL adds, SHIFT unselects.</div>
<div style="left:912px;top:564px;width:123px;height:15px;background:#eaeaea"></div>
<svg width="1074" height="580" viewBox="0 0 1074 580" fill="none">
 <path d="M915 569h6v4h-6zM932 572h8v2h-8zM948 569h6v5h-6zM964 569h5v7h-5z" stroke="#777" fill="#e3c060"/>
 <path d="M921 570l4 7M938 568l3 3M955 568l3 3M971 568l3 3" stroke="#c33"/>
 <path d="M983 569l6 6 2 3" stroke="#333" stroke-width="1.500"/><circle cx="1005" cy="572" r="4" stroke="#999" stroke-width="2"/><path d="M1015 566h10l-4 5v6l-2 1v-7z" stroke="#999"/>
</svg>
<div class="t" style="left:1026px;top:565px;font-size:7px;color:#333">:0</div>

<!-- Watermark -->
<svg width="1074" height="601" viewBox="0 0 1074 601">
 <g fill="#fff" stroke="#9a9a9a" stroke-width=".6">
  <path d="M831 543c-9 0-16 6-16 14 0 4 2 8 5 10l-2 5 6-3c2 1 5 1 7 1 9 0 16-6 16-13 0-8-7-14-16-14z"/>
  <path d="M841 551c-8 0-14 6-14 12s6 11 14 11c2 0 3 0 5-1l5 3-1-5c3-2 5-5 5-8 0-6-6-12-14-12z"/>
 </g>
 <g fill="#888"><circle cx="825" cy="552" r="1.300"/><circle cx="835" cy="552" r="1.300"/><circle cx="836" cy="561" r="1.300"/><circle cx="847" cy="561" r="1.300"/></g>
 <text x="862" y="570" font-family="'Liberation Sans','Noto Sans CJK SC',sans-serif" font-size="28" fill="#fff" fill-opacity=".85" stroke="#8a8a8a" stroke-width=".6" textLength="181" lengthAdjust="spacingAndGlyphs">海南省BIM中心</text>
</svg>

<!-- Taskbar -->
<div style="left:0;top:580px;width:1074px;height:21px;background:#0b0f14"></div>
<div style="left:30px;top:580px;width:233px;height:21px;background:#21252a"></div>
<div style="left:462px;top:580px;width:33px;height:21px;background:#353c44"></div>
<div class="t" style="left:55px;top:588px;font-size:10.200px;letter-spacing:0;color:#7a7d80">Ask me anything</div>
<div class="t" style="left:1006px;top:580px;font-size:8px;color:#d5d5d5">12:25 PM</div>
<div class="t" style="left:1004px;top:591px;font-size:8px;color:#d5d5d5">4/17/2017</div>
<svg width="1074" height="601" viewBox="0 0 1074 601" fill="none">
 <path d="M9 590l4-.6v4.100H9zM14 589.200l5-.8v5.100h-5zM9 594.500h4v4.100l-4-.6zM14 594.500h5v5l-5-.8z" fill="#e8e8e8"/>
 <circle cx="44" cy="594" r="6" stroke="#d0d0d0" stroke-width="1.600"/>
 <rect x="247" y="589" width="4" height="8" rx="2" fill="#5a5d60"/><path d="M245 594c0 3 2 4 4 4s4-1 4-4M249 598v2" stroke="#5a5d60"/>
 <rect x="275" y="590" width="9" height="9" stroke="#d5d5d5"/><path d="M273 592v5M286 592v5" stroke="#d5d5d5"/>
 <path d="M306 588h6l2 2h7v11h-15z" fill="#f0cc60"/><rect x="311" y="595" width="5" height="5" fill="#3a8fc8"/>
 <path d="M338 600l8-14h3l5 14h-4l-3-8-4 8z" fill="#19a0d0"/><path d="M346 586h3l5 14h-4z" fill="#1c6fb0"/>
 <ellipse cx="375" cy="593" rx="5" ry="4" fill="#e88c1e"/><ellipse cx="382" cy="596" rx="4" ry="3" fill="#43b02a"/>
 <circle cx="412.500" cy="594" r="7" fill="#e8701e"/><circle cx="413" cy="593" r="3.500" fill="#2d5fa8"/><path d="M407 589c3-2 8-3 11 1" stroke="#f5c33a" stroke-width="2"/>
 <path d="M439 589l6-3 6 2v10l-6 3-6-3z" fill="#d8252c"/><path d="M443 591h5M443 595h4" stroke="#f3d0d0"/>
 <text x="473" y="599" font-family="Liberation Sans" font-size="15" font-weight="bold" fill="#6f9fd0">R</text>
 <path d="M924 596l3.500-4 3.500 4" stroke="#ccc"/>
 <g fill="#cfd6d0"><rect x="940" y="589" width="3" height="3"/><rect x="945" y="589" width="3" height="3"/><rect x="940" y="594" width="3" height="3"/></g><circle cx="946" cy="597" r="3" fill="#38a838"/>
 <rect x="955" y="591" width="9" height="5" fill="#ccc"/><path d="M954 589l2 2" stroke="#ccc"/>
 <path d="M973 598l8-7v7z" fill="#777"/><path d="M989 592l-1 2h-1v3h1l2 2v-7zM993 593l3 3M996 593l-3 3" stroke="#ccc"/>
 <path d="M1052 589h11v8h-4l-2 2v-2h-5z" fill="#e5e5e5"/><circle cx="1060" cy="598" r="3.500" fill="#333"/>
 <text x="1058.500" y="600" font-family="Liberation Sans" font-size="6" fill="#eee">3</text>
</svg>
</div></body></html>
